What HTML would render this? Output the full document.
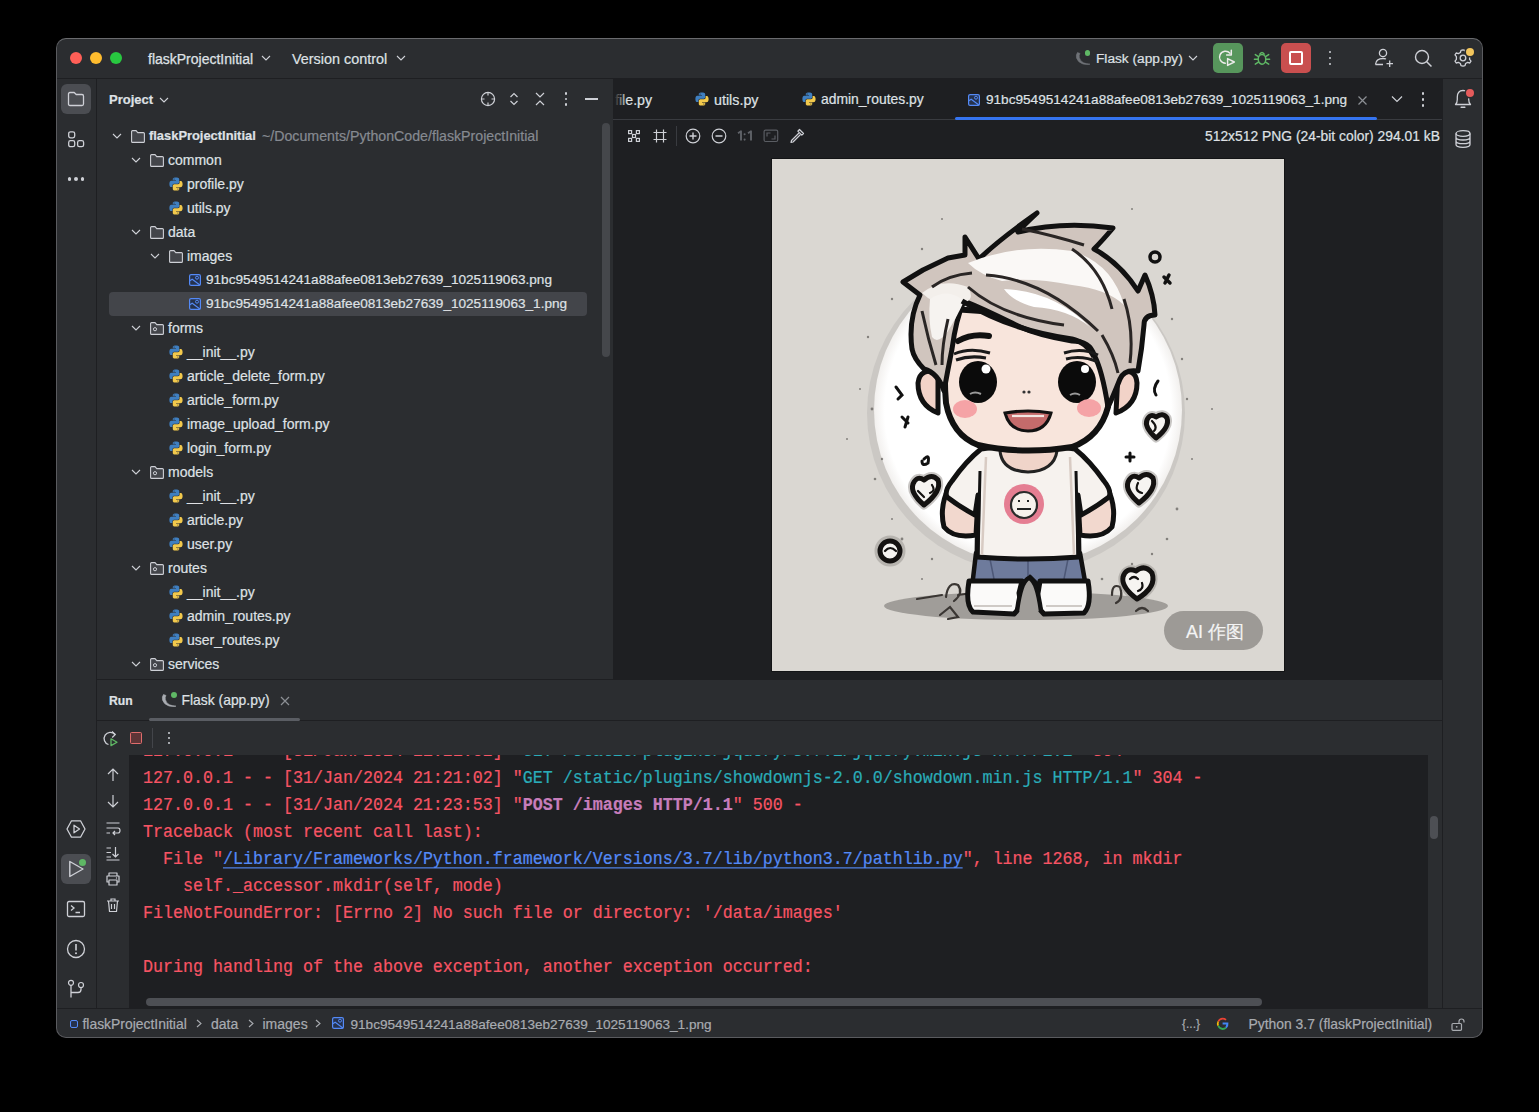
<!DOCTYPE html>
<html><head><meta charset="utf-8">
<style>
*{margin:0;padding:0;box-sizing:border-box}
html,body{width:1539px;height:1112px;background:#000;overflow:hidden}
body{font-family:"Liberation Sans",sans-serif;color:#dfe1e5;position:relative}
.win{position:absolute;left:56px;top:38px;width:1427px;height:1000px;border:1px solid #5a5b5f;border-top-color:#6a6b6e;border-radius:10px;overflow:hidden;background:#2b2d30}
.in{position:absolute;left:-57px;top:-39px;width:1539px;height:1112px}
.a{position:absolute}
.t{position:absolute;white-space:pre;-webkit-text-stroke:0.2px currentColor}
svg{position:absolute;overflow:visible}
</style></head><body>
<svg width="0" height="0" style="position:absolute">
<defs>
<symbol id="py" viewBox="0 0 14 14">
<path fill="#3f7fc0" d="M6.9 0.4C3.6 0.4 3.8 1.8 3.8 1.8V3.3H7V3.8H2.5C2.5 3.8 0.4 3.5 0.4 6.9C0.4 10.2 2.2 10.1 2.2 10.1H3.4V8.5C3.4 8.5 3.3 6.7 5.2 6.7H8.4C8.4 6.7 10.2 6.8 10.2 5V2.1C10.2 2.1 10.4 0.4 6.9 0.4ZM5.1 1.4A0.55 0.55 0 1 1 5.1 2.5A0.55 0.55 0 1 1 5.1 1.4Z"/>
<path fill="#f2c94c" d="M7.1 13.6C10.4 13.6 10.2 12.2 10.2 12.2V10.7H7V10.2H11.5C11.5 10.2 13.6 10.5 13.6 7.1C13.6 3.8 11.8 3.9 11.8 3.9H10.6V5.5C10.6 5.5 10.7 7.3 8.8 7.3H5.6C5.6 7.3 3.8 7.2 3.8 9V11.9C3.8 11.9 3.6 13.6 7.1 13.6ZM8.9 12.6A0.55 0.55 0 1 1 8.9 11.5A0.55 0.55 0 1 1 8.9 12.6Z"/>
</symbol>
<symbol id="fold" viewBox="0 0 14 13">
<path fill="#43454a" stroke="#ced0d6" stroke-width="1.1" d="M0.6 1.6Q0.6 0.6 1.6 0.6H5L6.8 2.6H12.4Q13.4 2.6 13.4 3.6V11.4Q13.4 12.4 12.4 12.4H1.6Q0.6 12.4 0.6 11.4Z"/>
</symbol>
<symbol id="pkg" viewBox="0 0 14 13">
<path fill="#43454a" stroke="#ced0d6" stroke-width="1.1" d="M0.6 1.6Q0.6 0.6 1.6 0.6H5L6.8 2.6H12.4Q13.4 2.6 13.4 3.6V11.4Q13.4 12.4 12.4 12.4H1.6Q0.6 12.4 0.6 11.4Z"/>
<circle cx="5" cy="7.2" r="1.6" fill="none" stroke="#ced0d6" stroke-width="1"/>
</symbol>
<symbol id="img" viewBox="0 0 12 12">
<rect x="0.6" y="0.6" width="10.8" height="10.8" rx="1.5" fill="#25324d" stroke="#548af7" stroke-width="1.2"/>
<circle cx="8" cy="3.7" r="1.5" fill="none" stroke="#548af7" stroke-width="1"/>
<path d="M0.8 6.8L3.2 5.2L11.2 11.2" fill="none" stroke="#548af7" stroke-width="1.1"/>
</symbol>
<symbol id="chev" viewBox="0 0 10 6">
<path d="M1 1L5 5L9 1" fill="none" stroke="#ced0d6" stroke-width="1.1"/>
</symbol>
</defs></svg>
<div class="win"><div class="in">

<div class="a" style="left:57px;top:78px;width:1425px;height:1px;background:#1e1f22;"></div>
<div class="a" style="left:96px;top:79px;width:1px;height:930px;background:#1e1f22;"></div>
<div class="a" style="left:613px;top:79px;width:829px;height:600px;background:#1e1f22;"></div>
<div class="a" style="left:97px;top:679px;width:1345px;height:1px;background:#1e1f22;"></div>
<div class="a" style="left:1442px;top:79px;width:1px;height:930px;background:#1e1f22;"></div>
<div class="a" style="left:97px;top:720px;width:1345px;height:1px;background:#1e1f22;"></div>
<div class="a" style="left:129px;top:755px;width:1299px;height:253px;background:#1e1f22;"></div>
<div class="a" style="left:57px;top:1008px;width:1425px;height:1px;background:#1e1f22;"></div>
<div class="a" style="left:70px;top:52px;width:12px;height:12px;border-radius:6px;background:#ff5f57"></div>
<div class="a" style="left:90px;top:52px;width:12px;height:12px;border-radius:6px;background:#febc2e"></div>
<div class="a" style="left:110px;top:52px;width:12px;height:12px;border-radius:6px;background:#28c840"></div>
<div class="t" style="left:148px;top:52.15px;font-size:14px;line-height:14px;color:#dfe1e5;font-weight:normal;font-family:'Liberation Sans',sans-serif;-webkit-text-stroke:0.25px #dfe1e5">flaskProjectInitial</div>
<svg style="left:261px;top:55px;" width="10" height="6" viewBox="0 0 10 6"><use href="#chev"/></svg>
<div class="t" style="left:292px;top:51.81px;font-size:14.4px;line-height:14.4px;color:#dfe1e5;font-weight:normal;font-family:'Liberation Sans',sans-serif;">Version control</div>
<svg style="left:396px;top:55px;" width="10" height="6" viewBox="0 0 10 6"><use href="#chev"/></svg>
<svg style="left:1075px;top:50px;" width="18" height="18" viewBox="0 0 18 18"><path d="M2.5 2.5Q0.8 4.5 1.5 8Q3 12.5 8 14Q11 14.8 15 14.2Q11 13.8 8.5 12.8Q5 11 4.3 7.5Q3.8 5 5 3.5Z" fill="#6f7277" stroke="#6f7277" stroke-width="0.6" stroke-linejoin="round"/></svg>
<div class="a" style="left:1084.5px;top:50px;width:5.6px;height:5.6px;border-radius:3px;background:#5fb865"></div>
<div class="t" style="left:1096px;top:52.40px;font-size:13.7px;line-height:13.7px;color:#dfe1e5;font-weight:normal;font-family:'Liberation Sans',sans-serif;">Flask (app.py)</div>
<svg style="left:1188px;top:55px;" width="10" height="6" viewBox="0 0 10 6"><use href="#chev"/></svg>
<div class="a" style="left:1213px;top:43px;width:30px;height:30px;background:#57965c;border-radius:5px"></div>
<svg style="left:1219px;top:49px;" width="18" height="18" viewBox="0 0 18 18"><path d="M11 4.2A6 6 0 1 0 6.3 14.2" fill="none" stroke="#ecebea" stroke-width="1.5" stroke-linecap="round"/><path d="M12.3 1.2V6.1H7.6" fill="none" stroke="#ecebea" stroke-width="1.5" stroke-linecap="round" stroke-linejoin="round"/><path d="M8.6 9.6L15.3 13L8.6 16.4Z" fill="none" stroke="#ecebea" stroke-width="1.5" stroke-linejoin="round"/></svg>
<svg style="left:1253px;top:49px;" width="18" height="18" viewBox="0 0 18 18"><path d="M6.4 5.6Q9 1.2 11.6 5.6" fill="none" stroke="#5fb865" stroke-width="1.5"/><ellipse cx="9" cy="10.3" rx="3.8" ry="4.9" fill="none" stroke="#5fb865" stroke-width="1.5"/><path d="M5.4 7.6L2.3 5.6M5.2 10.3H1.4M5.4 13.1L2.3 15.1M12.6 7.6L15.7 5.6M12.8 10.3H16.6M12.6 13.1L15.7 15.1" fill="none" stroke="#5fb865" stroke-width="1.5" stroke-linecap="round"/></svg>
<div class="a" style="left:1281px;top:43px;width:30px;height:30px;background:#c94f4f;border-radius:5px"></div>
<div class="a" style="left:1289px;top:51px;width:14px;height:14px;background:transparent;border:2px solid #fff;border-radius:2px"></div>
<div class="a" style="left:1328.8px;top:50.7px;width:2.6px;height:2.6px;border-radius:2px;background:#ced0d6"></div>
<div class="a" style="left:1328.8px;top:56.7px;width:2.6px;height:2.6px;border-radius:2px;background:#ced0d6"></div>
<div class="a" style="left:1328.8px;top:62.7px;width:2.6px;height:2.6px;border-radius:2px;background:#ced0d6"></div>
<svg style="left:1373px;top:47px;" width="20" height="20" viewBox="0 0 20 20"><circle cx="10" cy="6" r="3.6" fill="none" stroke="#ced0d6" stroke-width="1.3"/><path d="M2.5 17.5Q3 11.5 10 11.5Q12 11.5 13 12" fill="none" stroke="#ced0d6" stroke-width="1.3"/><path d="M2.5 17.5H10" stroke="#ced0d6" stroke-width="1.3"/><path d="M16.7 13.5V20M13.5 16.7H20" stroke="#ced0d6" stroke-width="1.3"/></svg>
<svg style="left:1413px;top:48px;" width="20" height="20" viewBox="0 0 20 20"><circle cx="9" cy="9" r="6.5" fill="none" stroke="#ced0d6" stroke-width="1.4"/><path d="M13.7 13.7L18.5 18.5" stroke="#ced0d6" stroke-width="1.5"/></svg>
<svg style="left:1453px;top:48px;" width="20" height="20" viewBox="0 0 20 20"><path d="M10 1.8L12 2.3L12.6 4.5L14.6 5.6L16.8 5L18 6.8L16.6 8.6V11.4L18 13.2L16.8 15L14.6 14.4L12.6 15.5L12 17.7L10 18.2L8 17.7L7.4 15.5L5.4 14.4L3.2 15L2 13.2L3.4 11.4V8.6L2 6.8L3.2 5L5.4 5.6L7.4 4.5L8 2.3Z" fill="none" stroke="#ced0d6" stroke-width="1.3" stroke-linejoin="round"/><circle cx="10" cy="10" r="2.8" fill="none" stroke="#ced0d6" stroke-width="1.3"/></svg>
<div class="a" style="left:1465.5px;top:47.5px;width:8px;height:8px;border-radius:4px;background:#f2c55c;box-shadow:0 0 0 1.5px #2b2d30"></div>
<div class="a" style="left:61px;top:84px;width:30px;height:30px;background:#4b4d52;border-radius:6px"></div>
<svg style="left:66px;top:89px;" width="20" height="20" viewBox="0 0 20 20"><path d="M2.5 5Q2.5 3.5 4 3.5H8.2L10.2 5.5H16Q17.5 5.5 17.5 7V15Q17.5 16.5 16 16.5H4Q2.5 16.5 2.5 15Z" fill="none" stroke="#ced0d6" stroke-width="1.3" stroke-linejoin="round"/></svg>
<svg style="left:66px;top:129px;" width="20" height="20" viewBox="0 0 20 20"><rect x="2.7" y="2.8" width="6" height="6" rx="1.8" fill="none" stroke="#ced0d6" stroke-width="1.3"/><rect x="2.7" y="11.7" width="6" height="6" rx="1.8" fill="none" stroke="#ced0d6" stroke-width="1.3"/><rect x="11.6" y="11.7" width="6" height="6" rx="1.8" fill="none" stroke="#ced0d6" stroke-width="1.3"/></svg>
<div class="a" style="left:67.8px;top:177.3px;width:3.4px;height:3.4px;border-radius:2px;background:#ced0d6"></div>
<div class="a" style="left:74.3px;top:177.3px;width:3.4px;height:3.4px;border-radius:2px;background:#ced0d6"></div>
<div class="a" style="left:80.8px;top:177.3px;width:3.4px;height:3.4px;border-radius:2px;background:#ced0d6"></div>
<svg style="left:66px;top:819px;" width="20" height="20" viewBox="0 0 20 20"><path d="M5.5 1.8H14.5L19 10L14.5 18.2H5.5L1 10Z" fill="none" stroke="#ced0d6" stroke-width="1.3" stroke-linejoin="round"/><path d="M8 6.2L13.5 10L8 13.8Z" fill="none" stroke="#ced0d6" stroke-width="1.3" stroke-linejoin="round"/></svg>
<div class="a" style="left:61px;top:854px;width:30px;height:30px;background:#4b4d52;border-radius:6px"></div>
<svg style="left:66px;top:859px;" width="20" height="20" viewBox="0 0 20 20"><path d="M3.8 2.5L17 10L3.8 17.5Z" fill="none" stroke="#ced0d6" stroke-width="1.4" stroke-linejoin="round"/></svg>
<div class="a" style="left:78.5px;top:858.5px;width:7.5px;height:7.5px;border-radius:4px;background:#5fb865;box-shadow:0 0 0 1.2px #4b4d52"></div>
<svg style="left:66px;top:899px;" width="20" height="20" viewBox="0 0 20 20"><rect x="1.5" y="2.5" width="17" height="15" rx="1.5" fill="none" stroke="#ced0d6" stroke-width="1.3"/><path d="M5 6.5L8 9L5 11.5M9.5 13.5H14" fill="none" stroke="#ced0d6" stroke-width="1.3"/></svg>
<svg style="left:66px;top:939px;" width="20" height="20" viewBox="0 0 20 20"><circle cx="10" cy="10" r="8.5" fill="none" stroke="#ced0d6" stroke-width="1.3"/><path d="M10 5V11.5" stroke="#ced0d6" stroke-width="1.6"/><circle cx="10" cy="14.3" r="1" fill="#ced0d6"/></svg>
<svg style="left:66px;top:979px;" width="20" height="20" viewBox="0 0 20 20"><circle cx="5" cy="3.8" r="2.5" fill="none" stroke="#ced0d6" stroke-width="1.2"/><circle cx="15" cy="6" r="2.5" fill="none" stroke="#ced0d6" stroke-width="1.2"/><path d="M5 6.3V18.5M5 13.5H12Q15 13.5 15 10.5V8.5" fill="none" stroke="#ced0d6" stroke-width="1.3"/></svg>
<svg style="left:1453px;top:89px;" width="20" height="20" viewBox="0 0 20 20"><path d="M2.5 15.5Q4.3 13.8 4.3 10.5V8Q4.3 1.5 10 1.5Q15.7 1.5 15.7 8V10.5Q15.7 13.8 17.5 15.5Z" fill="none" stroke="#ced0d6" stroke-width="1.3" stroke-linejoin="round"/><path d="M8.2 18.3H11.8" stroke="#ced0d6" stroke-width="1.6" stroke-linecap="round"/></svg>
<div class="a" style="left:1465.5px;top:88.5px;width:8px;height:8px;border-radius:4px;background:#e55b5b;box-shadow:0 0 0 1.5px #2b2d30"></div>
<svg style="left:1453px;top:129px;" width="20" height="20" viewBox="0 0 20 20"><ellipse cx="10" cy="4.5" rx="7" ry="2.8" fill="none" stroke="#ced0d6" stroke-width="1.3"/><path d="M3 4.5V15.5Q3 18.3 10 18.3Q17 18.3 17 15.5V4.5M3 8.2Q3 11 10 11Q17 11 17 8.2M3 11.9Q3 14.7 10 14.7Q17 14.7 17 11.9" fill="none" stroke="#ced0d6" stroke-width="1.3"/></svg>
<div class="t" style="left:109px;top:93.00px;font-size:13px;line-height:13px;color:#dfe1e5;font-weight:bold;font-family:'Liberation Sans',sans-serif;">Project</div>
<svg style="left:159px;top:97px;" width="10" height="6" viewBox="0 0 10 6"><use href="#chev"/></svg>
<svg style="left:480px;top:91px;" width="16" height="16" viewBox="0 0 16 16"><circle cx="8" cy="8" r="6.6" fill="none" stroke="#ced0d6" stroke-width="1.2"/><path d="M8 1.5V4.5M8 11.5V14.5M1.5 8H4.5M11.5 8H14.5" stroke="#ced0d6" stroke-width="1.2"/></svg>
<svg style="left:506px;top:91px;" width="16" height="16" viewBox="0 0 16 16"><path d="M4.5 6L8 2.5L11.5 6M4.5 10L8 13.5L11.5 10" fill="none" stroke="#ced0d6" stroke-width="1.2"/></svg>
<svg style="left:532px;top:91px;" width="16" height="16" viewBox="0 0 16 16"><path d="M4 2L8 6L12 2M4 14L8 10L12 14" fill="none" stroke="#ced0d6" stroke-width="1.2"/></svg>
<div class="a" style="left:564.6px;top:92.0px;width:2.6px;height:2.6px;border-radius:2px;background:#ced0d6"></div>
<div class="a" style="left:564.6px;top:97.7px;width:2.6px;height:2.6px;border-radius:2px;background:#ced0d6"></div>
<div class="a" style="left:564.6px;top:103.4px;width:2.6px;height:2.6px;border-radius:2px;background:#ced0d6"></div>
<div class="a" style="left:585px;top:98.3px;width:13px;height:1.4px;background:#ced0d6;"></div>
<div class="a" style="left:602px;top:123px;width:8px;height:234px;background:#45474b;border-radius:4px"></div>
<div class="a" style="left:109px;top:292px;width:478px;height:24px;background:#43454a;border-radius:4px"></div>
<svg style="left:112px;top:133px;" width="10" height="6" viewBox="0 0 10 6"><use href="#chev"/></svg>
<svg style="left:131px;top:130px;" width="14" height="13" viewBox="0 0 14 13"><use href="#fold"/></svg>
<div class="t" style="left:149px;top:130.08px;font-size:12.9px;line-height:12.9px;color:#dfe1e5;font-weight:bold;font-family:'Liberation Sans',sans-serif;">flaskProjectInitial</div>
<div class="t" style="left:262px;top:128.98px;font-size:14.2px;line-height:14.2px;color:#868a91;font-weight:normal;font-family:'Liberation Sans',sans-serif;">~/Documents/PythonCode/flaskProjectInitial</div>
<svg style="left:131px;top:157px;" width="10" height="6" viewBox="0 0 10 6"><use href="#chev"/></svg>
<svg style="left:150px;top:154px;" width="14" height="13" viewBox="0 0 14 13"><use href="#fold"/></svg>
<div class="t" style="left:168px;top:153.15px;font-size:14.0px;line-height:14.0px;color:#dfe1e5;font-weight:normal;font-family:'Liberation Sans',sans-serif;">common</div>
<svg style="left:169px;top:177px;" width="14" height="14" viewBox="0 0 14 14"><use href="#py"/></svg>
<div class="t" style="left:187px;top:177.15px;font-size:14.0px;line-height:14.0px;color:#dfe1e5;font-weight:normal;font-family:'Liberation Sans',sans-serif;">profile.py</div>
<svg style="left:169px;top:201px;" width="14" height="14" viewBox="0 0 14 14"><use href="#py"/></svg>
<div class="t" style="left:187px;top:201.15px;font-size:14.0px;line-height:14.0px;color:#dfe1e5;font-weight:normal;font-family:'Liberation Sans',sans-serif;">utils.py</div>
<svg style="left:131px;top:229px;" width="10" height="6" viewBox="0 0 10 6"><use href="#chev"/></svg>
<svg style="left:150px;top:226px;" width="14" height="13" viewBox="0 0 14 13"><use href="#fold"/></svg>
<div class="t" style="left:168px;top:225.15px;font-size:14.0px;line-height:14.0px;color:#dfe1e5;font-weight:normal;font-family:'Liberation Sans',sans-serif;">data</div>
<svg style="left:150px;top:253px;" width="10" height="6" viewBox="0 0 10 6"><use href="#chev"/></svg>
<svg style="left:169px;top:250px;" width="14" height="13" viewBox="0 0 14 13"><use href="#fold"/></svg>
<div class="t" style="left:187px;top:249.15px;font-size:14.0px;line-height:14.0px;color:#dfe1e5;font-weight:normal;font-family:'Liberation Sans',sans-serif;">images</div>
<svg style="left:189px;top:274px;" width="12" height="12" viewBox="0 0 12 12"><use href="#img"/></svg>
<div class="t" style="left:206px;top:273.49px;font-size:13.6px;line-height:13.6px;color:#dfe1e5;font-weight:normal;font-family:'Liberation Sans',sans-serif;">91bc9549514241a88afee0813eb27639_1025119063.png</div>
<svg style="left:189px;top:298px;" width="12" height="12" viewBox="0 0 12 12"><use href="#img"/></svg>
<div class="t" style="left:206px;top:297.49px;font-size:13.6px;line-height:13.6px;color:#dfe1e5;font-weight:normal;font-family:'Liberation Sans',sans-serif;">91bc9549514241a88afee0813eb27639_1025119063_1.png</div>
<svg style="left:131px;top:325px;" width="10" height="6" viewBox="0 0 10 6"><use href="#chev"/></svg>
<svg style="left:150px;top:322px;" width="14" height="13" viewBox="0 0 14 13"><use href="#pkg"/></svg>
<div class="t" style="left:168px;top:321.15px;font-size:14.0px;line-height:14.0px;color:#dfe1e5;font-weight:normal;font-family:'Liberation Sans',sans-serif;">forms</div>
<svg style="left:169px;top:345px;" width="14" height="14" viewBox="0 0 14 14"><use href="#py"/></svg>
<div class="t" style="left:187px;top:345.15px;font-size:14.0px;line-height:14.0px;color:#dfe1e5;font-weight:normal;font-family:'Liberation Sans',sans-serif;">__init__.py</div>
<svg style="left:169px;top:369px;" width="14" height="14" viewBox="0 0 14 14"><use href="#py"/></svg>
<div class="t" style="left:187px;top:369.15px;font-size:14.0px;line-height:14.0px;color:#dfe1e5;font-weight:normal;font-family:'Liberation Sans',sans-serif;">article_delete_form.py</div>
<svg style="left:169px;top:393px;" width="14" height="14" viewBox="0 0 14 14"><use href="#py"/></svg>
<div class="t" style="left:187px;top:393.15px;font-size:14.0px;line-height:14.0px;color:#dfe1e5;font-weight:normal;font-family:'Liberation Sans',sans-serif;">article_form.py</div>
<svg style="left:169px;top:417px;" width="14" height="14" viewBox="0 0 14 14"><use href="#py"/></svg>
<div class="t" style="left:187px;top:417.15px;font-size:14.0px;line-height:14.0px;color:#dfe1e5;font-weight:normal;font-family:'Liberation Sans',sans-serif;">image_upload_form.py</div>
<svg style="left:169px;top:441px;" width="14" height="14" viewBox="0 0 14 14"><use href="#py"/></svg>
<div class="t" style="left:187px;top:441.15px;font-size:14.0px;line-height:14.0px;color:#dfe1e5;font-weight:normal;font-family:'Liberation Sans',sans-serif;">login_form.py</div>
<svg style="left:131px;top:469px;" width="10" height="6" viewBox="0 0 10 6"><use href="#chev"/></svg>
<svg style="left:150px;top:466px;" width="14" height="13" viewBox="0 0 14 13"><use href="#pkg"/></svg>
<div class="t" style="left:168px;top:465.15px;font-size:14.0px;line-height:14.0px;color:#dfe1e5;font-weight:normal;font-family:'Liberation Sans',sans-serif;">models</div>
<svg style="left:169px;top:489px;" width="14" height="14" viewBox="0 0 14 14"><use href="#py"/></svg>
<div class="t" style="left:187px;top:489.15px;font-size:14.0px;line-height:14.0px;color:#dfe1e5;font-weight:normal;font-family:'Liberation Sans',sans-serif;">__init__.py</div>
<svg style="left:169px;top:513px;" width="14" height="14" viewBox="0 0 14 14"><use href="#py"/></svg>
<div class="t" style="left:187px;top:513.15px;font-size:14.0px;line-height:14.0px;color:#dfe1e5;font-weight:normal;font-family:'Liberation Sans',sans-serif;">article.py</div>
<svg style="left:169px;top:537px;" width="14" height="14" viewBox="0 0 14 14"><use href="#py"/></svg>
<div class="t" style="left:187px;top:537.15px;font-size:14.0px;line-height:14.0px;color:#dfe1e5;font-weight:normal;font-family:'Liberation Sans',sans-serif;">user.py</div>
<svg style="left:131px;top:565px;" width="10" height="6" viewBox="0 0 10 6"><use href="#chev"/></svg>
<svg style="left:150px;top:562px;" width="14" height="13" viewBox="0 0 14 13"><use href="#pkg"/></svg>
<div class="t" style="left:168px;top:561.15px;font-size:14.0px;line-height:14.0px;color:#dfe1e5;font-weight:normal;font-family:'Liberation Sans',sans-serif;">routes</div>
<svg style="left:169px;top:585px;" width="14" height="14" viewBox="0 0 14 14"><use href="#py"/></svg>
<div class="t" style="left:187px;top:585.15px;font-size:14.0px;line-height:14.0px;color:#dfe1e5;font-weight:normal;font-family:'Liberation Sans',sans-serif;">__init__.py</div>
<svg style="left:169px;top:609px;" width="14" height="14" viewBox="0 0 14 14"><use href="#py"/></svg>
<div class="t" style="left:187px;top:609.15px;font-size:14.0px;line-height:14.0px;color:#dfe1e5;font-weight:normal;font-family:'Liberation Sans',sans-serif;">admin_routes.py</div>
<svg style="left:169px;top:633px;" width="14" height="14" viewBox="0 0 14 14"><use href="#py"/></svg>
<div class="t" style="left:187px;top:633.15px;font-size:14.0px;line-height:14.0px;color:#dfe1e5;font-weight:normal;font-family:'Liberation Sans',sans-serif;">user_routes.py</div>
<svg style="left:131px;top:661px;" width="10" height="6" viewBox="0 0 10 6"><use href="#chev"/></svg>
<svg style="left:150px;top:658px;" width="14" height="13" viewBox="0 0 14 13"><use href="#pkg"/></svg>
<div class="t" style="left:168px;top:657.15px;font-size:14.0px;line-height:14.0px;color:#dfe1e5;font-weight:normal;font-family:'Liberation Sans',sans-serif;">services</div>
<div class="a" style="left:613px;top:119px;width:829px;height:1px;background:#393b40;"></div>
<div class="t" style="left:615px;top:92.98px;font-size:14.2px;line-height:14.2px;color:#dfe1e5;font-weight:normal;font-family:'Liberation Sans',sans-serif;">file.py</div>
<div class="a" style="left:613px;top:88px;width:14px;height:22px;background:linear-gradient(90deg,#1e1f22 10%,rgba(30,31,34,0));"></div>
<svg style="left:695px;top:92px;" width="14" height="14" viewBox="0 0 14 14"><use href="#py"/></svg>
<div class="t" style="left:714px;top:92.90px;font-size:14.3px;line-height:14.3px;color:#dfe1e5;font-weight:normal;font-family:'Liberation Sans',sans-serif;">utils.py</div>
<svg style="left:802px;top:92px;" width="14" height="14" viewBox="0 0 14 14"><use href="#py"/></svg>
<div class="t" style="left:821px;top:93.23px;font-size:13.9px;line-height:13.9px;color:#dfe1e5;font-weight:normal;font-family:'Liberation Sans',sans-serif;">admin_routes.py</div>
<svg style="left:968px;top:94px;" width="12" height="12" viewBox="0 0 12 12"><use href="#img"/></svg>
<div class="t" style="left:986px;top:93.49px;font-size:13.6px;line-height:13.6px;color:#dfe1e5;font-weight:normal;font-family:'Liberation Sans',sans-serif;">91bc9549514241a88afee0813eb27639_1025119063_1.png</div>
<svg style="left:1357px;top:95px;" width="11" height="11" viewBox="0 0 11 11"><path d="M1.5 1.5L9.5 9.5M9.5 1.5L1.5 9.5" stroke="#8c8f94" stroke-width="1.2"/></svg>
<svg style="left:1391px;top:95px;" width="12" height="8" viewBox="0 0 12 8"><path d="M1 1.5L6 6.5L11 1.5" fill="none" stroke="#ced0d6" stroke-width="1.2"/></svg>
<div class="a" style="left:1421.7px;top:92.2px;width:2.6px;height:2.6px;border-radius:2px;background:#ced0d6"></div>
<div class="a" style="left:1421.7px;top:98.2px;width:2.6px;height:2.6px;border-radius:2px;background:#ced0d6"></div>
<div class="a" style="left:1421.7px;top:104.2px;width:2.6px;height:2.6px;border-radius:2px;background:#ced0d6"></div>
<div class="a" style="left:955px;top:116.5px;width:422px;height:3px;background:#3574f0;border-radius:1.5px"></div>
<svg style="left:627px;top:129px;" width="14" height="14" viewBox="0 0 14 14"><g fill="none" stroke="#ced0d6" stroke-width="1.2"><rect x="1.6" y="1.6" width="3" height="3"/><rect x="9.4" y="1.6" width="3" height="3"/><rect x="5.5" y="5.5" width="3" height="3"/><rect x="1.6" y="9.4" width="3" height="3"/><rect x="9.4" y="9.4" width="3" height="3"/></g></svg>
<svg style="left:653px;top:129px;" width="14" height="14" viewBox="0 0 14 14"><path d="M3.5 0.5V13.5M10.5 0.5V13.5M0.5 3.5H13.5M0.5 10.5H13.5" fill="none" stroke="#ced0d6" stroke-width="1.2"/></svg>
<div class="a" style="left:676px;top:126px;width:1px;height:20px;background:#393b40;"></div>
<svg style="left:685px;top:128px;" width="16" height="16" viewBox="0 0 16 16"><circle cx="8" cy="8" r="6.8" fill="none" stroke="#ced0d6" stroke-width="1.2"/><path d="M8 4.5V11.5M4.5 8H11.5" stroke="#ced0d6" stroke-width="1.4"/></svg>
<svg style="left:711px;top:128px;" width="16" height="16" viewBox="0 0 16 16"><circle cx="8" cy="8" r="6.8" fill="none" stroke="#ced0d6" stroke-width="1.2"/><path d="M4.5 8H11.5" stroke="#ced0d6" stroke-width="1.4"/></svg>
<svg style="left:737px;top:130px;" width="16" height="11" viewBox="0 0 16 11"><path d="M1 3.2L4 1.2V10.6M11 3.2L14 1.2V10.6" fill="none" stroke="#5f6268" stroke-width="1.9" stroke-linejoin="round"/><circle cx="7.6" cy="4.3" r="1.05" fill="#5f6268"/><circle cx="7.6" cy="9.6" r="1.05" fill="#5f6268"/></svg>
<svg style="left:763px;top:129px;" width="16" height="14" viewBox="0 0 16 14"><rect x="1.1" y="1.1" width="13.6" height="11.4" rx="1.5" fill="none" stroke="#5a5d63" stroke-width="1.2"/><path d="M4 7.5V4H7.5M12 6.5V10H8.5" fill="none" stroke="#5a5d63" stroke-width="1.2"/></svg>
<svg style="left:789px;top:128px;" width="16" height="16" viewBox="0 0 16 16"><path d="M10.5 1.5L14.5 5.5L12.8 7.2L8.8 3.2Z" fill="none" stroke="#ced0d6" stroke-width="1.2" stroke-linejoin="round"/><path d="M10 5L2.5 12.5L2 14.5L4 14L11.5 6.5" fill="none" stroke="#ced0d6" stroke-width="1.2" stroke-linejoin="round"/></svg>
<div class="t" style="left:1205px;top:130.27px;font-size:13.86px;line-height:13.86px;color:#dfe1e5;font-weight:normal;font-family:'Liberation Sans',sans-serif;">512x512 PNG (24-bit color) 294.01 kB</div>
<div class="a" style="left:771px;top:158px;width:514px;height:514px;background:#131416;"></div>
<svg style="left:772px;top:159px" width="512" height="512" viewBox="0 0 512 512">
<defs>
<radialGradient id="cg" cx="0.5" cy="0.5" r="0.5">
<stop offset="0.93" stop-color="#ffffff"/><stop offset="1" stop-color="#f2f0ee"/>
</radialGradient>
</defs>
<rect width="512" height="512" fill="#dad7d2"/>
<circle cx="254" cy="254" r="159" fill="#cbc8c4"/>
<circle cx="256" cy="251" r="154" fill="url(#cg)"/>
<g fill="#4a4744" opacity="0.6">
<circle cx="96" cy="178" r="1.2"/><circle cx="88" cy="230" r="1"/><circle cx="103" cy="320" r="1.3"/><circle cx="120" cy="360" r="1"/><circle cx="410" cy="200" r="1.2"/><circle cx="420" cy="300" r="1"/><circle cx="395" cy="380" r="1.3"/><circle cx="150" cy="420" r="1"/><circle cx="360" cy="405" r="1.2"/><circle cx="170" cy="60" r="1"/><circle cx="360" cy="50" r="1"/><circle cx="440" cy="250" r="1"/><circle cx="75" cy="280" r="1"/>
<circle cx="100" cy="250" r="1.4"/><circle cx="110" cy="300" r="1.2"/><circle cx="130" cy="380" r="1.4"/><circle cx="160" cy="400" r="1.2"/><circle cx="330" cy="420" r="1.3"/><circle cx="380" cy="395" r="1.2"/><circle cx="405" cy="350" r="1.4"/><circle cx="415" cy="240" r="1.2"/><circle cx="400" cy="160" r="1.2"/><circle cx="150" cy="90" r="1.2"/><circle cx="120" cy="140" r="1.2"/>
</g>
<!-- ground shadow -->
<ellipse cx="254" cy="447" rx="142" ry="14" fill="#a09d99"/>
<!-- ground debris -->
<g fill="none" stroke="#3a3633" stroke-width="2.2" stroke-linecap="round">
<path d="M145 440L170 436M174 438Q176 422 186 426Q192 434 182 442M168 456L178 448L186 458L176 460M186 436L200 434"/>
<path d="M340 436Q340 424 348 428Q352 440 344 444M356 434L368 440M364 452Q370 446 376 452"/>
</g>
<!-- floating items -->
<g stroke="#9c9894" stroke-width="9" stroke-linejoin="round" fill="none" opacity="0.55">
<path d="M152 346Q138 334 141 325Q145 316 152 321Q160 314 166 321Q170 332 152 346Z"/>
<path d="M367 344Q353 332 356 323Q360 314 367 319Q375 312 381 319Q385 330 367 344Z"/>
<path d="M384 279Q372 268 375 261Q378 254 384 258Q391 253 395 259Q398 268 384 279Z"/>
<circle cx="118" cy="392" r="11"/>
<path d="M365 440Q349 428 351 418Q354 408 364 412Q373 405 380 414Q385 428 365 440Z"/>
</g>
<g stroke="#141211" stroke-width="5" stroke-linejoin="round" fill="#f6f4f1">
<path d="M152 346Q138 334 141 325Q145 316 152 321Q160 314 166 321Q170 332 152 346Z"/>
<path d="M367 344Q353 332 356 323Q360 314 367 319Q375 312 381 319Q385 330 367 344Z"/>
<path d="M384 279Q372 268 375 261Q378 254 384 258Q391 253 395 259Q398 268 384 279Z"/>
<circle cx="118" cy="392" r="10"/>
<path d="M365 440Q349 428 351 418Q354 408 364 412Q373 405 380 414Q385 428 365 440Z"/>
</g>
<g fill="none" stroke="#141211" stroke-width="2.2" stroke-linecap="round">
<path d="M160 326Q164 332 158 334M146 332L152 338M366 324Q362 332 370 334M380 262Q386 268 382 272M113 392Q118 386 124 392M358 420Q362 416 366 420M370 424Q372 430 366 432"/>
</g>
<g fill="none" stroke="#111" stroke-width="3" stroke-linecap="round">
<circle cx="383" cy="98" r="5" stroke-width="3.5"/><path d="M392 118L398 124M393 124L397 116" stroke-width="3.5"/><path d="M152 300Q158 294 156 304Q150 308 150 302"/>
<path d="M124 228L130 236L126 240M130 258L136 264M133 268L136 258"/><path d="M386 222Q380 230 384 236"/><path d="M354 298H362M358 294V302"/>
</g>
<!-- arms -->
<path d="M177 328Q167 348 172 368Q182 380 204 376L206 340Z" fill="#f2d8ce" stroke="#111" stroke-width="5" stroke-linejoin="round"/>
<path d="M335 328Q345 348 340 368Q330 380 308 376L306 340Z" fill="#f2d8ce" stroke="#111" stroke-width="5" stroke-linejoin="round"/>
<!-- shorts -->
<path d="M204 394L308 394L314 428L268 428L258 418L248 428L200 428Z" fill="#6e7b9c" stroke="#111" stroke-width="4.5" stroke-linejoin="round"/>
<path d="M256 398V420M218 400L222 420M296 400L292 420" stroke="#4d5877" stroke-width="1.5"/>
<!-- shirt -->
<path d="M209 290Q194 302 180 322Q172 332 175 338Q188 348 203 356L206 336L205 398Q256 402 307 398L306 336L309 356Q324 348 337 338Q340 332 332 322Q318 302 303 290Q256 282 209 290Z" fill="#f6f2ee" stroke="#111" stroke-width="5" stroke-linejoin="round"/>
<path d="M208 312L206 398M304 312L306 398" stroke="#111" stroke-width="3"/>
<path d="M228 292Q230 312 256 313Q282 312 285 292" fill="#f0d4c9" stroke="#222" stroke-width="3"/>
<path d="M214 298L210 396M298 298L302 396" stroke="#d8cbc3" stroke-width="2.5"/>
<!-- badge -->
<circle cx="252" cy="345" r="20" fill="#e57e92"/>
<circle cx="252" cy="346" r="13" fill="#f7f1ec" stroke="#2a2a2a" stroke-width="2.2"/>
<path d="M245 350H259M246 342H248M255 342H257" stroke="#222" stroke-width="2"/>
<!-- shoes -->
<path d="M197 422Q193 446 201 453L242 455Q250 448 247 434L250 422Z" fill="#fbfaf9" stroke="#111" stroke-width="5" stroke-linejoin="round"/>
<path d="M268 422L266 434Q264 448 272 455L312 454Q320 446 316 422Z" fill="#fbfaf9" stroke="#111" stroke-width="5" stroke-linejoin="round"/>
<path d="M246 452Q250 424 258 420Q264 424 268 452Z" fill="#a09d99"/>
<path d="M245 452Q249 422 257 419Q265 422 269 452" fill="none" stroke="#111" stroke-width="4.5"/>
<path d="M202 447H240M274 447H310" stroke="#cfcac6" stroke-width="2"/>
<!-- ears -->
<path d="M166 214Q148 208 146 224Q146 246 166 254Z" fill="#f2d3c8" stroke="#111" stroke-width="5" stroke-linejoin="round"/>
<path d="M346 214Q364 208 365 224Q365 246 344 254Z" fill="#f2d3c8" stroke="#111" stroke-width="5" stroke-linejoin="round"/>
<!-- face -->
<path d="M180 150Q170 200 174 244Q180 276 206 286Q250 296 300 288Q328 278 336 248Q342 200 326 160Z" fill="#f8e5dc" stroke="#111" stroke-width="6" stroke-linejoin="round"/>
<!-- hair -->
<path d="M131 123L151 111L176 99L193 96L193 78L207 100Q228 80 265 54Q250 68 246 73Q290 62 341 69Q330 82 322 90Q348 104 366 132L373 116Q382 136 383 156Q372 156 372 166Q370 190 366 212Q352 210 348 220Q340 240 336 248Q330 210 322 196Q318 182 300 182Q262 176 240 164Q212 150 192 142Q184 160 180 190Q176 210 172 232Q166 214 152 210Q142 200 140 190Q136 160 148 136Z" fill="#d0c5be" stroke="#111" stroke-width="5" stroke-linejoin="round"/>
<path d="M196 104Q245 84 300 92Q340 104 352 146Q335 130 300 126Q260 118 230 122Q208 116 196 104Z" fill="#faf8f6"/>
<path d="M150 134Q170 118 196 128Q204 142 190 144Q166 150 150 134Z" fill="#f3efeb"/>
<path d="M158 140Q176 128 192 142Q186 156 176 172Q166 186 160 178Q156 160 158 140Z" fill="#f6f3f0"/>
<path d="M232 130Q282 132 318 168Q296 150 262 148Q240 142 232 130Z" fill="#ffffff"/>
<path d="M190 142Q240 172 300 180Q316 184 322 198" fill="none" stroke="#111" stroke-width="5"/>
<path d="M214 116Q272 120 326 172M196 128Q230 158 292 166M150 152Q156 180 164 206M352 140Q362 170 358 204M300 90Q330 110 340 150M250 70Q280 76 312 86M160 128Q176 116 200 114M330 176Q342 196 346 214M176 160Q170 186 170 206" fill="none" stroke="#2a2625" stroke-width="3"/>
<!-- eyebrows / lashes -->
<path d="M186 182Q200 174 217 177" fill="none" stroke="#111" stroke-width="6" stroke-linecap="round"/>
<path d="M182 195Q198 188 218 194M184 201Q198 196 214 199" fill="none" stroke="#1a1a1a" stroke-width="3"/>
<path d="M292 194Q310 188 326 196M294 200Q310 196 326 203" fill="none" stroke="#1a1a1a" stroke-width="3"/>
<!-- eyes -->
<ellipse cx="206" cy="223" rx="19" ry="21" fill="#0b0b0b"/>
<ellipse cx="305" cy="223" rx="19" ry="21" fill="#0b0b0b"/>
<circle cx="214" cy="210" r="4.5" fill="#fff"/>
<circle cx="313" cy="210" r="4" fill="#fff"/>
<path d="M198 235Q203 232 209 235M298 236Q303 233 308 236" stroke="#9a9a9a" stroke-width="2" fill="none"/>
<!-- cheeks -->
<ellipse cx="193" cy="250" rx="12" ry="9" fill="#f5a3a6"/>
<ellipse cx="317" cy="249" rx="12" ry="9" fill="#f5a3a6"/>
<!-- nose -->
<circle cx="252" cy="233" r="1.6" fill="#333"/><circle cx="257" cy="233" r="1.6" fill="#333"/>
<!-- mouth -->
<path d="M233 254Q256 250 279 254Q274 272 256 272Q238 272 233 254Z" fill="#c46b6b" stroke="#111" stroke-width="3"/>
<path d="M240 257H272" stroke="#f2e6e2" stroke-width="2.2"/>
</svg>
<div class="a" style="left:1164px;top:611px;width:99px;height:39px;background:#9d9a96;border-radius:20px"></div>
<div class="t" style="left:1186px;top:622.96px;font-size:18px;line-height:18px;color:#f4f4f4;font-weight:normal;font-family:'Liberation Sans',sans-serif;">AI 作图</div>
<div class="t" style="left:109px;top:694.67px;font-size:12.2px;line-height:12.2px;color:#dfe1e5;font-weight:bold;font-family:'Liberation Sans',sans-serif;">Run</div>
<svg style="left:161px;top:692px;" width="18" height="18" viewBox="0 0 18 18"><path d="M2.5 2.5Q0.8 4.5 1.5 8Q3 12.5 8 14Q11 14.8 15 14.2Q11 13.8 8.5 12.8Q5 11 4.3 7.5Q3.8 5 5 3.5Z" fill="#a9acb1" stroke="#a9acb1" stroke-width="0.6" stroke-linejoin="round"/></svg>
<div class="a" style="left:171px;top:692px;width:6px;height:6px;border-radius:3px;background:#5fb865"></div>
<div class="t" style="left:181.5px;top:693.53px;font-size:13.9px;line-height:13.9px;color:#dfe1e5;font-weight:normal;font-family:'Liberation Sans',sans-serif;">Flask (app.py)</div>
<svg style="left:280px;top:696px;" width="10" height="10" viewBox="0 0 10 10"><path d="M1 1L9 9M9 1L1 9" stroke="#8c8f94" stroke-width="1.2"/></svg>
<div class="a" style="left:149px;top:718px;width:151px;height:3px;background:#5a5d63;border-radius:1.5px"></div>
<svg style="left:102px;top:730px;" width="17" height="17" viewBox="0 0 17 17"><path d="M13 4.5A6.2 6.2 0 1 0 6.5 14.5" fill="none" stroke="#ced0d6" stroke-width="1.3"/><path d="M10 1.5L13.2 4.6L10.2 7.5" fill="none" stroke="#ced0d6" stroke-width="1.3"/><path d="M9 8.8L15 12.2L9 15.6Z" fill="none" stroke="#5fb865" stroke-width="1.3" stroke-linejoin="round"/></svg>
<div class="a" style="left:130px;top:732px;width:12px;height:12px;background:#5e3537;border:1.2px solid #e06c6c;border-radius:1.5px"></div>
<div class="a" style="left:152px;top:728px;width:1px;height:20px;background:#43454a;"></div>
<div class="a" style="left:167.7px;top:731.7px;width:2.6px;height:2.6px;border-radius:2px;background:#ced0d6"></div>
<div class="a" style="left:167.7px;top:736.7px;width:2.6px;height:2.6px;border-radius:2px;background:#ced0d6"></div>
<div class="a" style="left:167.7px;top:741.7px;width:2.6px;height:2.6px;border-radius:2px;background:#ced0d6"></div>
<svg style="left:105px;top:767px;" width="16" height="16" viewBox="0 0 16 16"><path d="M8 2V14M3 7L8 2L13 7" fill="none" stroke="#ced0d6" stroke-width="1.2"/></svg>
<svg style="left:105px;top:793px;" width="16" height="16" viewBox="0 0 16 16"><path d="M8 2V14M3 9L8 14L13 9" fill="none" stroke="#ced0d6" stroke-width="1.2"/></svg>
<svg style="left:105px;top:820px;" width="16" height="16" viewBox="0 0 16 16"><path d="M1.5 3H14.5M1.5 8H13Q15 8 15 10.5Q15 13 13 13H8M1.5 13H5M10 11L8 13L10 15" fill="none" stroke="#ced0d6" stroke-width="1.2"/></svg>
<svg style="left:105px;top:845px;" width="16" height="16" viewBox="0 0 16 16"><path d="M1.5 3H6M1.5 7.5H6M1.5 12H6M1.5 15H14.5M10.5 2V12M7.5 9L10.5 12L13.5 9" fill="none" stroke="#ced0d6" stroke-width="1.2"/></svg>
<svg style="left:105px;top:871px;" width="16" height="16" viewBox="0 0 16 16"><path d="M4 5V2H12V5M4 11H2V5H14V11H12M4 9H12V14H4Z" fill="none" stroke="#ced0d6" stroke-width="1.2" stroke-linejoin="round"/><circle cx="11.5" cy="7" r="0.7" fill="#ced0d6"/></svg>
<svg style="left:105px;top:897px;" width="16" height="16" viewBox="0 0 16 16"><path d="M2 4H14M6 4V2H10V4M3.5 4L4.5 14.5H11.5L12.5 4M6.5 7V12M9.5 7V12" fill="none" stroke="#ced0d6" stroke-width="1.2"/></svg>
<div class="a" style="left:129px;top:755px;width:1299px;height:253px;overflow:hidden"><div class="a" style="left:-129px;top:-755px;width:1539px;height:1112px">
<div class="t" style="left:143px;top:743.73px;font-size:16.667px;line-height:16.667px;color:#dfe1e5;font-weight:normal;font-family:'Liberation Mono',monospace;transform:scaleY(1.14);transform-origin:0 12.77px"><span style="color:#f75464;">127.0.0.1 - - [31/Jan/2024 21:21:02] &quot;</span><span style="color:#2aacb8;">GET /static/plugins/jquery/3.7.1/jquery.min.js HTTP/1.1</span><span style="color:#f75464;">&quot; 304 -</span></div>
<div class="t" style="left:143px;top:770.73px;font-size:16.667px;line-height:16.667px;color:#dfe1e5;font-weight:normal;font-family:'Liberation Mono',monospace;transform:scaleY(1.14);transform-origin:0 12.77px"><span style="color:#f75464;">127.0.0.1 - - [31/Jan/2024 21:21:02] &quot;</span><span style="color:#2aacb8;">GET /static/plugins/showdownjs-2.0.0/showdown.min.js HTTP/1.1</span><span style="color:#f75464;">&quot; 304 -</span></div>
<div class="t" style="left:143px;top:797.73px;font-size:16.667px;line-height:16.667px;color:#dfe1e5;font-weight:normal;font-family:'Liberation Mono',monospace;transform:scaleY(1.14);transform-origin:0 12.77px"><span style="color:#f75464;">127.0.0.1 - - [31/Jan/2024 21:23:53] &quot;</span><span style="color:#c77dbb;font-weight:bold">POST /images HTTP/1.1</span><span style="color:#f75464;">&quot; 500 -</span></div>
<div class="t" style="left:143px;top:824.73px;font-size:16.667px;line-height:16.667px;color:#dfe1e5;font-weight:normal;font-family:'Liberation Mono',monospace;transform:scaleY(1.14);transform-origin:0 12.77px"><span style="color:#f75464;">Traceback (most recent call last):</span></div>
<div class="t" style="left:143px;top:851.73px;font-size:16.667px;line-height:16.667px;color:#dfe1e5;font-weight:normal;font-family:'Liberation Mono',monospace;transform:scaleY(1.14);transform-origin:0 12.77px"><span style="color:#f75464;">  File &quot;</span><span style="color:#548af7;text-decoration:underline;text-underline-offset:3px">/Library/Frameworks/Python.framework/Versions/3.7/lib/python3.7/pathlib.py</span><span style="color:#f75464;">&quot;, line 1268, in mkdir</span></div>
<div class="t" style="left:143px;top:878.73px;font-size:16.667px;line-height:16.667px;color:#dfe1e5;font-weight:normal;font-family:'Liberation Mono',monospace;transform:scaleY(1.14);transform-origin:0 12.77px"><span style="color:#f75464;">    self._accessor.mkdir(self, mode)</span></div>
<div class="t" style="left:143px;top:905.73px;font-size:16.667px;line-height:16.667px;color:#dfe1e5;font-weight:normal;font-family:'Liberation Mono',monospace;transform:scaleY(1.14);transform-origin:0 12.77px"><span style="color:#f75464;">FileNotFoundError: [Errno 2] No such file or directory: &#x27;/data/images&#x27;</span></div>
<div class="t" style="left:143px;top:959.73px;font-size:16.667px;line-height:16.667px;color:#dfe1e5;font-weight:normal;font-family:'Liberation Mono',monospace;transform:scaleY(1.14);transform-origin:0 12.77px"><span style="color:#f75464;">During handling of the above exception, another exception occurred:</span></div>
</div></div>
<div class="a" style="left:1430px;top:816px;width:8px;height:23px;background:#4d4f54;border-radius:4px"></div>
<div class="a" style="left:129px;top:995px;width:1299px;height:13px;background:#1e1f22;"></div>
<div class="a" style="left:146px;top:998px;width:1116px;height:8px;background:#4d4f54;border-radius:4px"></div>
<div class="a" style="left:70px;top:1020px;width:8px;height:8px;background:#25324d;border:1.2px solid #548af7;border-radius:2px"></div>
<div class="t" style="left:82.5px;top:1017.53px;font-size:13.9px;line-height:13.9px;color:#a8abb0;font-weight:normal;font-family:'Liberation Sans',sans-serif;">flaskProjectInitial</div>
<svg style="left:196px;top:1019px;" width="6" height="9" viewBox="0 0 6 9"><path d="M1 1L5 4.5L1 8" fill="none" stroke="#a8abb0" stroke-width="1.1"/></svg>
<div class="t" style="left:211px;top:1017.45px;font-size:14px;line-height:14px;color:#a8abb0;font-weight:normal;font-family:'Liberation Sans',sans-serif;">data</div>
<svg style="left:247.5px;top:1019px;" width="6" height="9" viewBox="0 0 6 9"><path d="M1 1L5 4.5L1 8" fill="none" stroke="#a8abb0" stroke-width="1.1"/></svg>
<div class="t" style="left:262.5px;top:1017.45px;font-size:14px;line-height:14px;color:#a8abb0;font-weight:normal;font-family:'Liberation Sans',sans-serif;">images</div>
<svg style="left:315px;top:1019px;" width="6" height="9" viewBox="0 0 6 9"><path d="M1 1L5 4.5L1 8" fill="none" stroke="#a8abb0" stroke-width="1.1"/></svg>
<svg style="left:332px;top:1017px;" width="12" height="12" viewBox="0 0 12 12"><use href="#img"/></svg>
<div class="t" style="left:350.5px;top:1017.79px;font-size:13.6px;line-height:13.6px;color:#a8abb0;font-weight:normal;font-family:'Liberation Sans',sans-serif;">91bc9549514241a88afee0813eb27639_1025119063_1.png</div>
<div class="t" style="left:1182px;top:1018.34px;font-size:12px;line-height:12px;color:#a8abb0;font-weight:normal;font-family:'Liberation Sans',sans-serif;">{...}</div>
<svg style="left:1216px;top:1017px;" width="13" height="13" viewBox="0 0 13 13"><path d="M12.4 6.6H6.6V8.2H10.6Q10 11 6.6 11.2A4.6 4.6 0 1 1 9.6 3.1L10.8 1.9A6.3 6.3 0 1 0 6.6 12.9Q12.6 12.9 12.4 6.6Z" fill="none"/><path d="M1.6 4Q3 1 6.6 0.8Q8.9 0.8 10.6 2.2L9.4 3.4Q8.2 2.4 6.6 2.4Q4 2.5 2.9 5Z" fill="#ea4335"/><path d="M1.6 4L2.9 5Q2.3 6.6 2.9 8.2L1.6 9.3Q0.2 6.6 1.6 4Z" fill="#fbbc05"/><path d="M1.6 9.3L2.9 8.2Q4 10.9 6.6 11Q8.4 11 9.4 10L10.7 11.2Q9 12.9 6.6 12.9Q3 12.7 1.6 9.3Z" fill="#34a853"/><path d="M12.4 5.6H6.6V7.6H10.3Q10 9 9.4 10L10.7 11.2Q12.8 9.2 12.4 5.6Z" fill="#4285f4"/></svg>
<div class="t" style="left:1248.5px;top:1017.53px;font-size:13.9px;line-height:13.9px;color:#a8abb0;font-weight:normal;font-family:'Liberation Sans',sans-serif;">Python 3.7 (flaskProjectInitial)</div>
<svg style="left:1451px;top:1018px;" width="15" height="13" viewBox="0 0 15 13"><rect x="1" y="5.5" width="9.5" height="6.8" rx="1" fill="none" stroke="#a8abb0" stroke-width="1.2"/><path d="M8 5.5V3.5Q8 1 10.5 1Q13 1 13 3.5V4.5" fill="none" stroke="#a8abb0" stroke-width="1.2"/><circle cx="5.7" cy="8.8" r="0.9" fill="#a8abb0"/></svg>
</div></div>
</body></html>
